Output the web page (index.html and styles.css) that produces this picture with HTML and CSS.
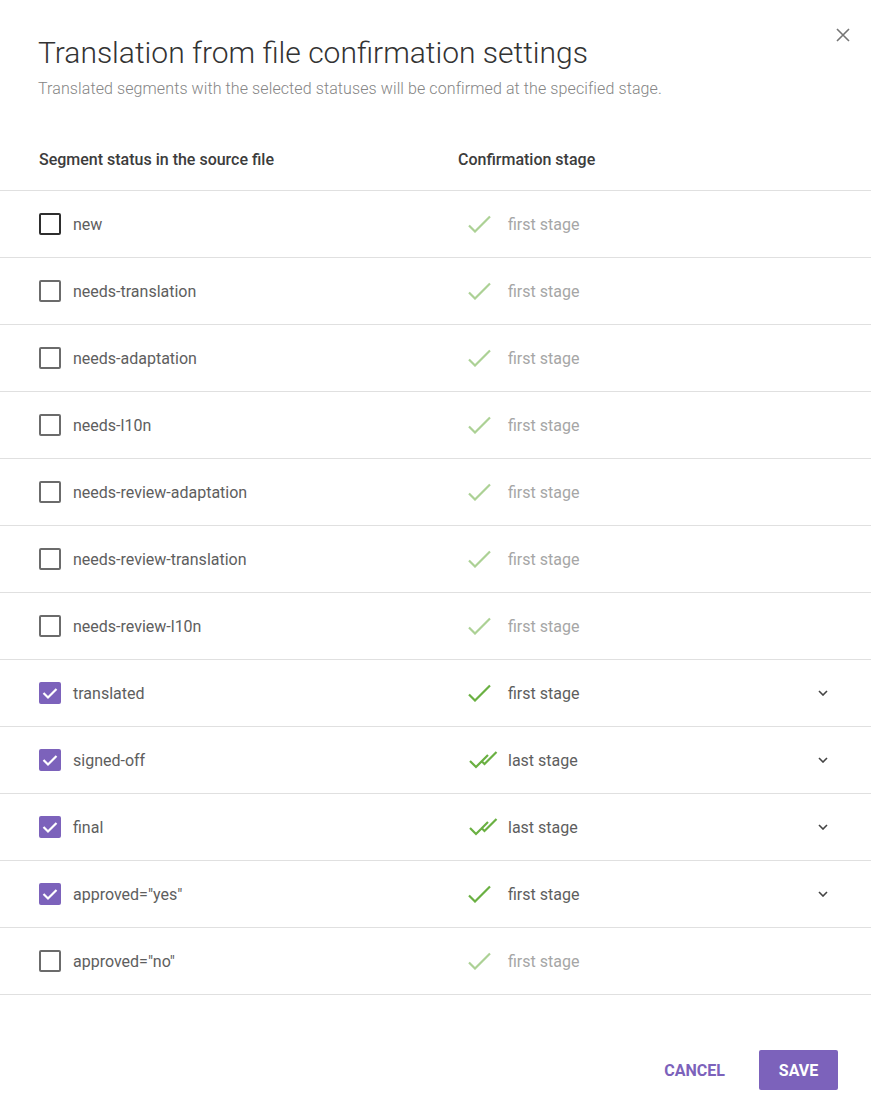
FILE: index.html
```html
<!DOCTYPE html>
<html lang="en">
<head>
<meta charset="utf-8">
<title>Translation from file confirmation settings</title>
<link rel="stylesheet" href="styles.css">
</head>
<body>
<div class="dialog">
  <button class="close" aria-label="Close">
    <svg width="14" height="14" viewBox="0 0 14 14"><path d="M1 1L13 13M13 1L1 13" stroke="#757575" stroke-width="1.6" fill="none"/></svg>
  </button>
  <header class="head">
    <h1 class="title">Translation from file confirmation settings</h1>
    <p class="subtitle">Translated segments with the selected statuses will be confirmed at the specified stage.</p>
  </header>

  <div class="table">
    <div class="row row-head">
      <div class="col-status">Segment status in the source file</div>
      <div class="col-stage">Confirmation stage</div>
    </div>

    <div class="row"><div class="col-status"><span class="cb cb-focus"></span><span class="label">new</span></div><div class="col-stage off"><svg class="ico" viewBox="0 0 30 18"><path d="M1 10.5L7 16.5L22 1.5"/></svg><span>first stage</span></div></div>
    <div class="row"><div class="col-status"><span class="cb"></span><span class="label">needs-translation</span></div><div class="col-stage off"><svg class="ico" viewBox="0 0 30 18"><path d="M1 10.5L7 16.5L22 1.5"/></svg><span>first stage</span></div></div>
    <div class="row"><div class="col-status"><span class="cb"></span><span class="label">needs-adaptation</span></div><div class="col-stage off"><svg class="ico" viewBox="0 0 30 18"><path d="M1 10.5L7 16.5L22 1.5"/></svg><span>first stage</span></div></div>
    <div class="row"><div class="col-status"><span class="cb"></span><span class="label">needs-l10n</span></div><div class="col-stage off"><svg class="ico" viewBox="0 0 30 18"><path d="M1 10.5L7 16.5L22 1.5"/></svg><span>first stage</span></div></div>
    <div class="row"><div class="col-status"><span class="cb"></span><span class="label">needs-review-adaptation</span></div><div class="col-stage off"><svg class="ico" viewBox="0 0 30 18"><path d="M1 10.5L7 16.5L22 1.5"/></svg><span>first stage</span></div></div>
    <div class="row"><div class="col-status"><span class="cb"></span><span class="label">needs-review-translation</span></div><div class="col-stage off"><svg class="ico" viewBox="0 0 30 18"><path d="M1 10.5L7 16.5L22 1.5"/></svg><span>first stage</span></div></div>
    <div class="row"><div class="col-status"><span class="cb"></span><span class="label">needs-review-l10n</span></div><div class="col-stage off"><svg class="ico" viewBox="0 0 30 18"><path d="M1 10.5L7 16.5L22 1.5"/></svg><span>first stage</span></div></div>

    <div class="row"><div class="col-status"><span class="cb cb-on"><svg viewBox="0 0 22 22"><path d="M4.5 11L9 15.5L17.5 7"/></svg></span><span class="label">translated</span></div><div class="col-stage on"><svg class="ico" viewBox="0 0 30 18"><path d="M1 10.5L7 16.5L22 1.5"/></svg><span>first stage</span><svg class="chev" viewBox="0 0 10 6"><path d="M1 1L5 5L9 1"/></svg></div></div>
    <div class="row"><div class="col-status"><span class="cb cb-on"><svg viewBox="0 0 22 22"><path d="M4.5 11L9 15.5L17.5 7"/></svg></span><span class="label">signed-off</span></div><div class="col-stage on"><svg class="ico" viewBox="0 0 30 18"><path d="M2 10L8 16L20 4M13 9.5L16.5 13L28.5 1"/></svg><span>last stage</span><svg class="chev" viewBox="0 0 10 6"><path d="M1 1L5 5L9 1"/></svg></div></div>
    <div class="row"><div class="col-status"><span class="cb cb-on"><svg viewBox="0 0 22 22"><path d="M4.5 11L9 15.5L17.5 7"/></svg></span><span class="label">final</span></div><div class="col-stage on"><svg class="ico" viewBox="0 0 30 18"><path d="M2 10L8 16L20 4M13 9.5L16.5 13L28.5 1"/></svg><span>last stage</span><svg class="chev" viewBox="0 0 10 6"><path d="M1 1L5 5L9 1"/></svg></div></div>
    <div class="row"><div class="col-status"><span class="cb cb-on"><svg viewBox="0 0 22 22"><path d="M4.5 11L9 15.5L17.5 7"/></svg></span><span class="label">approved="yes"</span></div><div class="col-stage on"><svg class="ico" viewBox="0 0 30 18"><path d="M1 10.5L7 16.5L22 1.5"/></svg><span>first stage</span><svg class="chev" viewBox="0 0 10 6"><path d="M1 1L5 5L9 1"/></svg></div></div>
    <div class="row"><div class="col-status"><span class="cb"></span><span class="label">approved="no"</span></div><div class="col-stage off"><svg class="ico" viewBox="0 0 30 18"><path d="M1 10.5L7 16.5L22 1.5"/></svg><span>first stage</span></div></div>
  </div>

  <footer class="actions">
    <button class="btn btn-text">CANCEL</button>
    <button class="btn btn-primary">SAVE</button>
  </footer>
</div>
</body>
</html>
```

FILE: styles.css
```css
* { box-sizing: border-box; }

html, body {
  margin: 0;
  background: #fff;
  font-family: Roboto, "Noto Sans", "Liberation Sans", sans-serif;
  color: #333;
}

.dialog {
  position: relative;
  width: 871px;
  min-height: 1098px;
  padding-top: 34px;
}

.close {
  position: absolute;
  top: 28px;
  right: 21px;
  width: 14px;
  height: 14px;
  padding: 0;
  border: 0;
  background: none;
  cursor: pointer;
}
.close svg { display: block; }

.head { padding: 0 38px; }

.title {
  margin: 0;
  font-size: 30px;
  line-height: 38px;
  font-weight: 300;
  color: #333;
}

.subtitle {
  margin: 7px 0 0;
  font-size: 16px;
  line-height: 20px;
  font-weight: 300;
  letter-spacing: 0.1px;
  color: #858585;
}

.table { margin-top: 39px; }

.row {
  display: flex;
  align-items: center;
  height: 67px;
  border-bottom: 1px solid #e0e0e0;
  padding-left: 39px;
}

.row-head {
  height: 53px;
  align-items: flex-start;
  padding-top: 12px;
  font-size: 16px;
  line-height: 20px;
  font-weight: 500;
  color: #3c3c3c;
}

.col-status {
  width: 419px;
  display: flex;
  align-items: center;
  gap: 12px;
}

.col-stage {
  flex: 1;
  display: flex;
  align-items: center;
  font-size: 16px;
  font-weight: 400;
}

.label {
  font-size: 16px;
  font-weight: 400;
  color: #5e5e5e;
}

.row-head .col-stage { font-weight: 500; }

.cb {
  width: 22px;
  height: 22px;
  border: 2px solid #6b6b6b;
  border-radius: 2px;
  flex: none;
  position: relative;
}
.cb-focus { border-color: #2e2e2e; }
.cb-on {
  background: #7c62bb;
  border-color: #7c62bb;
}
.cb-on svg {
  position: absolute;
  left: -2px;
  top: -2px;
  width: 22px;
  height: 22px;
  display: block;
}
.cb-on path { fill: none; stroke: #fff; stroke-width: 2.2; }

.ico {
  width: 30px;
  height: 18px;
  margin-left: 10px;
  margin-right: 10px;
  flex: none;
}
.ico path { fill: none; stroke-width: 2.2; }
.off .ico path { stroke: #acd195; }
.on .ico path { stroke: #6ab042; }

.off span { color: #a6a6a6; }
.on span { color: #5e5e5e; }

.chev {
  width: 10px;
  height: 6px;
  margin-left: auto;
  margin-right: 43px;
}
.chev path { fill: none; stroke: #444; stroke-width: 1.6; }

.actions {
  display: flex;
  justify-content: flex-end;
  align-items: center;
  gap: 18px;
  padding: 55px 33px 0 0;
}

.btn {
  font-family: Roboto, "Liberation Sans", sans-serif;
  font-size: 16px;
  font-weight: 700;
  height: 40px;
  border: 0;
  border-radius: 2px;
  cursor: pointer;
}
.btn-text {
  background: none;
  color: #7c62bb;
  padding: 0 16px;
}
.btn-primary {
  background: #7c62bb;
  color: #fff;
  padding: 0 19px;
  width: 79px;
}
```
